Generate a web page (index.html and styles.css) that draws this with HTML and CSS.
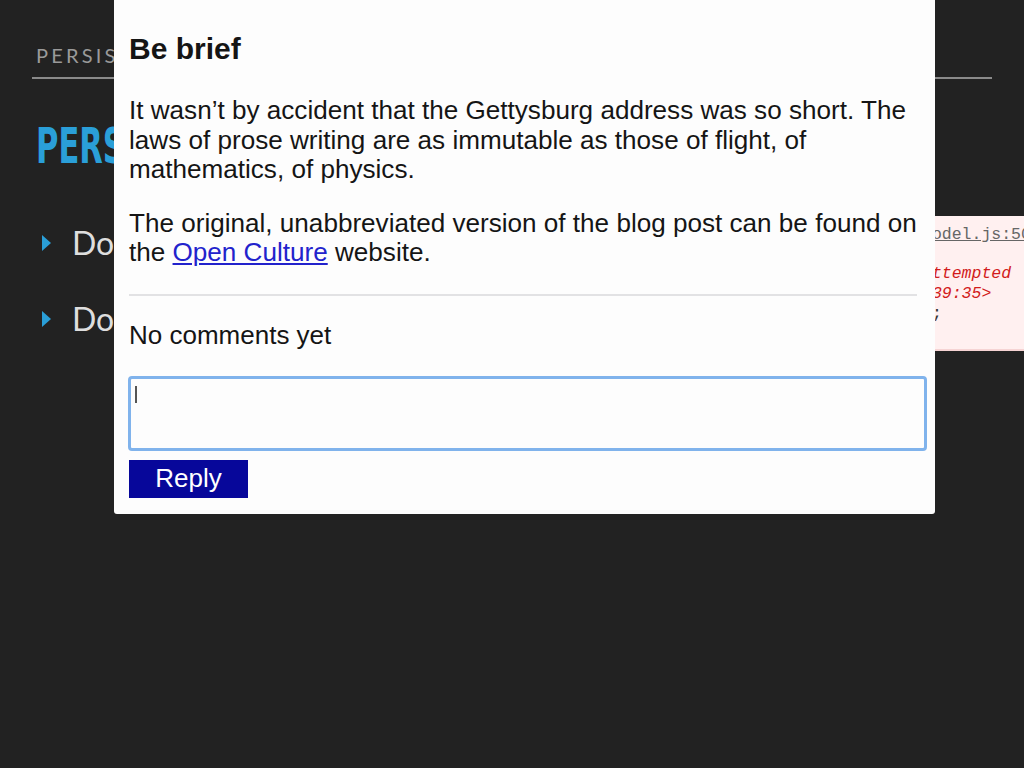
FILE: index.html
```html
<!DOCTYPE html>
<html lang="en">
<head>
    <meta charset="UTF-8">
    <meta name="viewport" content="width=device-width, initial-scale=1.0">
    <title>Persistence</title>
    <link rel="stylesheet" href="styles.css">
</head>
<body>

    <div class="slide">
        <div class="slide-top">PERSISTENCE</div>
        <h1 class="slide-title">PERSISTENCE</h1>
        <ul class="points">
            <li>Don't lose data</li>
            <li>Don't block the user</li>
        </ul>
    </div>

    <div class="console">
        <div class="console-src">model.js:50</div>
        <div class="console-err">attempted</div>
        <div class="console-err">:39:35&gt;</div>
        <div class="console-code">);</div>
    </div>

    <div class="post">
        <h2>Be brief</h2>
        <p>It wasn’t by accident that the Gettysburg address was so short. The laws of prose writing are as immutable as those of flight, of mathematics, of physics.</p>
        <p>The original, unabbreviated version of the blog post can be found on the <a href="#">Open Culture</a> website.</p>
        <hr>
        <div class="no-comments">No comments yet</div>
        <form class="reply-form">
            <div class="reply-box"><span class="caret"></span></div>
            <button type="button">Reply</button>
        </form>
    </div>

</body>
</html>
```

FILE: styles.css
```css
body {
    margin: 0;
    background-color: #222222;
    font-family: 'Lato', 'Liberation Sans', sans-serif;
    width: 1024px;
    height: 768px;
    overflow: hidden;
    position: relative;
}
.slide {
    padding: 0 32px;
}
.slide-top {
    padding: 45px 0 12px 4px;
    font-size: 20px;
    line-height: 20px;
    letter-spacing: 3.2px;
    color: #9a9a9a;
    border-bottom: 2px solid #8a8a8a;
    white-space: nowrap;
}
.slide-title {
    margin: 42px 0 0 4px;
    font-family: 'DejaVu Sans', sans-serif;
    font-stretch: condensed;
    font-weight: bold;
    font-size: 50px;
    line-height: 50px;
    color: #2a9fd8;
    transform: scaleX(0.68);
    transform-origin: left center;
    white-space: nowrap;
}
.points {
    list-style: none;
    margin: 53px 0 0;
    padding: 0 0 0 40px;
}
.points li {
    position: relative;
    font-size: 32px;
    line-height: 38px;
    color: #dedede;
    margin-bottom: 38px;
}
.points li::before {
    content: '';
    position: absolute;
    left: -30px;
    top: 11px;
    border-left: 9px solid #2a9fd8;
    border-top: 8px solid transparent;
    border-bottom: 8px solid transparent;
}
.console {
    position: absolute;
    left: 912px;
    top: 216px;
    width: 102px;
    height: 124px;
    padding: 9px 0 0 10px;
    background-color: #fff0f0;
    border-bottom: 2px solid #f6d4d4;
    font-family: 'Liberation Mono', monospace;
    font-size: 16.5px;
    line-height: 20px;
    white-space: nowrap;
    overflow: hidden;
}
.console-src {
    color: #666;
    text-decoration: underline;
    margin-bottom: 19px;
}
.console-err {
    color: #d21c1c;
    font-style: italic;
}
.console-code {
    color: #333;
}
.post {
    position: absolute;
    left: 114px;
    top: 0;
    width: 788px;
    height: 514px;
    padding: 0 18px 0 15px;
    background-color: #fdfdfd;
    border-bottom-right-radius: 3px;
    border-bottom-left-radius: 3px;
    font-family: 'Liberation Sans', Arial, sans-serif;
    color: #151515;
}
.post h2 {
    margin: 0;
    padding-top: 32px;
    font-size: 30px;
    line-height: 34px;
}
.post p {
    margin: 24px -12px 0 0;
    font-size: 26.1px;
    line-height: 29.5px;
}
.post h2 + p {
    margin-top: 30px;
}
.post a {
    color: #2222cc;
}
.post hr {
    margin: 26px 0 0;
    border: none;
    border-top: 2px solid #e2e2e4;
}
.no-comments {
    margin-top: 25px;
    font-size: 26px;
    line-height: 28px;
}
.reply-form {
    margin: 27px 0 0 -1px;
}
.reply-box {
    width: 793px;
    height: 69px;
    border: 3px solid #80b3ec;
    border-radius: 4px;
    padding: 0;
}
.caret {
    display: block;
    width: 2px;
    height: 17px;
    margin: 7px 0 0 4px;
    background-color: #555;
}
.reply-form button {
    display: block;
    margin: 9px 0 0 1px;
    width: 119px;
    height: 38px;
    border: none;
    border-radius: 0;
    background-color: #07079a;
    color: white;
    font-family: 'Liberation Sans', Arial, sans-serif;
    font-size: 26px;
    padding: 0;
}
```
